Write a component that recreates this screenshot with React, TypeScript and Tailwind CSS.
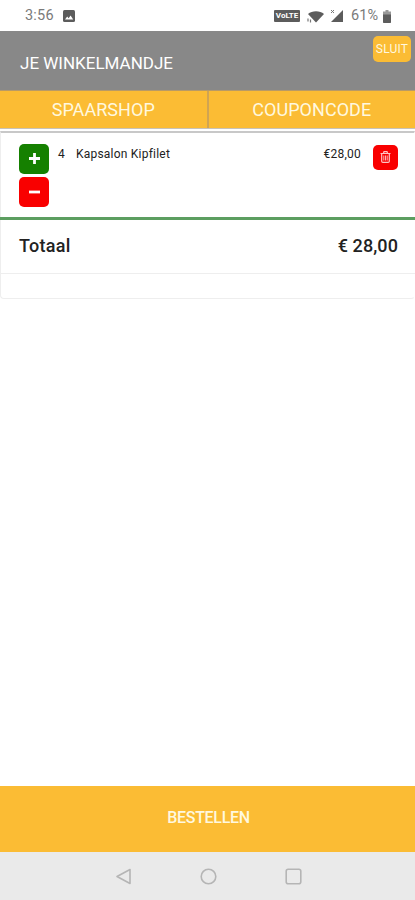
import type { ReactNode } from 'react';

const items = [{ id: 1, amount: 4, name: 'Kapsalon Kipfilet', price: '€28,00' }];

function StatusBar() {
  return (
    <div className="flex h-[31px] shrink-0 items-center justify-between bg-white pl-[25px] pr-[24px] pt-px text-[#7a7a7a]">
      <div className="flex items-center gap-[9px]">
        <span className="pt-px text-[14.5px] leading-none tracking-[0.2px]">3:56</span>
        <svg width="12" height="12" viewBox="0 0 12 12">
          <rect width="12" height="12" rx="1.5" fill="#5c5c5c" />
          <path d="M2 9.5 4.2 6.5 5.6 8.2 7.6 5.6 10.2 9.5Z" fill="#fff" />
        </svg>
      </div>
      <div className="flex items-center">
        <span className="mr-[7px] flex h-3 w-[26px] items-center justify-center rounded-[1px] bg-[#5c5c5c] text-[8px] font-bold leading-none text-white">
          VoLTE
        </span>
        <svg className="mr-[5px]" width="18" height="13" viewBox="0 0 18 13">
          <path d="M1 4C5 .2 13 .2 17 4L9 12.5Z" fill="#5c5c5c" />
          <path d="M1 8.5v3M3.5 9.5v3" stroke="#777" strokeWidth="1.2" />
        </svg>
        <svg className="mr-[7px]" width="14" height="14" viewBox="0 0 14 14">
          <path d="M13 1v12H1Z" fill="#5c5c5c" />
          <path d="M1 1 4 4M4 1 1 4" stroke="#777" strokeWidth="1" />
        </svg>
        <span className="mr-[5px] pt-px text-[14.5px] leading-none">61%</span>
        <svg width="8" height="13" viewBox="0 0 8 13">
          <path d="M2.5 0h3v1.5H8V12a1 1 0 0 1-1 1H1a1 1 0 0 1-1-1V1.5h2.5Z" fill="#999" />
          <path d="M0 4.5h8V12a1 1 0 0 1-1 1H1a1 1 0 0 1-1-1Z" fill="#5c5c5c" />
        </svg>
      </div>
    </div>
  );
}

function TabButton({ children }: { children: ReactNode }) {
  return (
    <button className="flex-1 pt-px text-center text-[18px] leading-none tracking-[0.05px] text-[#fff8df]">
      {children}
    </button>
  );
}

export default function App() {
  return (
    <div className="flex h-[900px] w-[415px] flex-col overflow-hidden bg-white font-['Roboto',sans-serif] text-[#222]">
      <StatusBar />

      {/* Header */}
      <header className="flex h-[59px] shrink-0 items-start justify-between bg-[#888] pl-5 pr-1">
        <h1 className="mt-[22px] text-[17px] leading-5 text-white">JE WINKELMANDJE</h1>
        <button className="mt-[5px] h-[26px] w-[38px] rounded-[5px] bg-[#fbbc34] text-[12px] leading-none tracking-[0.2px] text-[#fff8df]">
          SLUIT
        </button>
      </header>

      {/* Tabs */}
      <div className="flex h-[39px] shrink-0 border-b border-t border-b-[#c8c2b8] border-t-[#b89a66] bg-[#fbbc34]">
        <TabButton>SPAARSHOP</TabButton>
        <div className="w-0.5 bg-[#d0a452]" />
        <TabButton>COUPONCODE</TabButton>
      </div>

      {/* Cart */}
      <section className="mt-0.5 h-[168px] shrink-0 rounded-b border border-t-2 border-[#eee] border-r-transparent border-t-[#c8c8c8]">
        <div className="h-[84px]">
          {items.map((item) => (
            <div
              key={item.id}
              className="flex items-start pl-[18px] pr-4 pt-[11px] text-[12px] leading-4 tracking-[0.22px]"
            >
              <div className="flex flex-col gap-[3px]">
                <button className="flex h-[30px] w-[30px] items-center justify-center rounded-[5px] bg-[#158000]">
                  <svg className="-mt-0.5" width="11" height="11" viewBox="0 0 11 11">
                    <path d="M5.5 0v11M0 5.5h11" stroke="#fff" strokeWidth="2.8" />
                  </svg>
                </button>
                <button className="flex h-[30px] w-[30px] items-center justify-center rounded-[5px] bg-[#f90000]">
                  <svg width="11" height="11" viewBox="0 0 11 11">
                    <path d="M0 5h11" stroke="#fff" strokeWidth="2.8" />
                  </svg>
                </button>
              </div>
              <span className="ml-[9px] mt-0.5 w-[18px]">{item.amount}</span>
              <span className="mt-0.5">{item.name}</span>
              <span className="ml-auto mt-0.5">{item.price}</span>
              <button className="ml-3 mt-px flex h-[25px] w-[25px] items-center justify-center rounded-[5px] bg-[#f90000]">
                <svg className="-mt-0.5" width="11" height="12" viewBox="0 0 11 12" fill="none" stroke="#ffc4c4">
                  <path d="M.5 2.5h10M3.5 2 4 .7h3L7.5 2M1.7 3v7.2q0 1.2 1.2 1.2h5.2q1.2 0 1.2-1.2V3" strokeWidth="1.2" />
                  <path d="M3.8 4.5v5M5.5 4.5v5M7.2 4.5v5" strokeWidth=".9" />
                </svg>
              </button>
            </div>
          ))}
        </div>
        <div className="-mx-px flex h-[57px] items-center justify-between border-b border-t-[3px] border-b-[#eee] border-t-[#5c9e60] pb-px pl-[19px] pr-[17px] text-[18px] font-medium leading-none">
          <span className="tracking-[0.3px]">Totaal</span>
          <span className="tracking-[0.1px]">€ 28,00</span>
        </div>
      </section>

      {/* Order button */}
      <button className="mt-auto h-[66px] shrink-0 bg-[#fbbc34] pb-0.5 pl-0.5 text-[16px] font-medium leading-none tracking-[-0.3px] text-[#fff8df]">
        BESTELLEN
      </button>

      <nav className="flex h-12 shrink-0 items-center justify-center gap-[68px] bg-[#eaeaea] pl-px">
        <svg width="17" height="17" viewBox="0 0 17 17" fill="none" stroke="#b5b5b5" strokeWidth="1.6">
          <path d="M15 1.5v14L2 8.5Z" strokeLinejoin="round" />
        </svg>
        <svg width="17" height="17" viewBox="0 0 17 17" fill="none" stroke="#b5b5b5" strokeWidth="1.6">
          <circle cx="8.5" cy="8.5" r="7.3" />
        </svg>
        <svg width="17" height="17" viewBox="0 0 17 17" fill="none" stroke="#b5b5b5" strokeWidth="1.6">
          <rect x="1.2" y="1.2" width="14.6" height="14.6" rx="2" />
        </svg>
      </nav>
    </div>
  );
}
